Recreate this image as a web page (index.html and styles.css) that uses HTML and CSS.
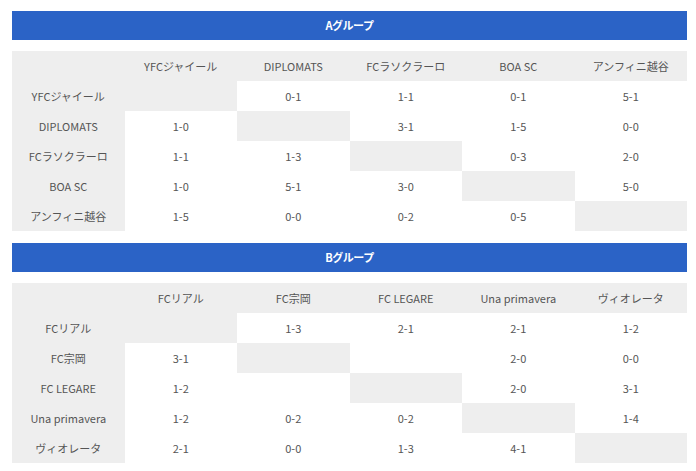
FILE: index.html
```html
<!DOCTYPE html>
<html lang="ja">
<head>
<meta charset="utf-8">
<link rel="stylesheet" href="styles.css">
</head>
<body>
<div class="page">
  <section class="group">
    <h2 class="group-title">Aグループ</h2>
    <table class="matrix">
      <tr class="head"><th></th><th>YFCジャイール</th><th>DIPLOMATS</th><th>FCラソクラーロ</th><th>BOA SC</th><th>アンフィニ越谷</th></tr>
      <tr><th>YFCジャイール</th><td class="self"></td><td>0-1</td><td>1-1</td><td>0-1</td><td>5-1</td></tr>
      <tr><th>DIPLOMATS</th><td>1-0</td><td class="self"></td><td>3-1</td><td>1-5</td><td>0-0</td></tr>
      <tr><th>FCラソクラーロ</th><td>1-1</td><td>1-3</td><td class="self"></td><td>0-3</td><td>2-0</td></tr>
      <tr><th>BOA SC</th><td>1-0</td><td>5-1</td><td>3-0</td><td class="self"></td><td>5-0</td></tr>
      <tr><th>アンフィニ越谷</th><td>1-5</td><td>0-0</td><td>0-2</td><td>0-5</td><td class="self"></td></tr>
    </table>
  </section>
  <section class="group">
    <h2 class="group-title">Bグループ</h2>
    <table class="matrix">
      <tr class="head"><th></th><th>FCリアル</th><th>FC宗岡</th><th>FC LEGARE</th><th>Una primavera</th><th>ヴィオレータ</th></tr>
      <tr><th>FCリアル</th><td class="self"></td><td>1-3</td><td>2-1</td><td>2-1</td><td>1-2</td></tr>
      <tr><th>FC宗岡</th><td>3-1</td><td class="self"></td><td></td><td>2-0</td><td>0-0</td></tr>
      <tr><th>FC LEGARE</th><td>1-2</td><td></td><td class="self"></td><td>2-0</td><td>3-1</td></tr>
      <tr><th>Una primavera</th><td>1-2</td><td>0-2</td><td>0-2</td><td class="self"></td><td>1-4</td></tr>
      <tr><th>ヴィオレータ</th><td>2-1</td><td>0-0</td><td>1-3</td><td>4-1</td><td class="self"></td></tr>
    </table>
  </section>
</div>
</body>
</html>
```
FILE: styles.css
```css
html, body {
  margin: 0;
  padding: 0;
  background: #ffffff;
}
body {
  font-family: "Noto Sans CJK JP", "Noto Sans", sans-serif;
  color: #555555;
}
.page {
  width: 675px;
  padding: 11px 0 0 12px;
}
.group {
  margin-bottom: 12px;
}
.group-title {
  margin: 0 0 11px;
  height: 29px;
  line-height: 29px;
  background: #2b63c6;
  color: #ffffff;
  font-size: 11px;
  font-weight: bold;
  text-align: center;
  letter-spacing: -0.5px;
}
.matrix {
  width: 675px;
  border-collapse: collapse;
  table-layout: fixed;
}
.matrix th, .matrix td {
  height: 30px;
  padding: 0;
  text-align: center;
  vertical-align: middle;
  font-size: 11px;
  font-weight: normal;
  background: #ffffff;
  color: #555555;
  white-space: nowrap;
}
.matrix th,
.matrix .head th,
.matrix td.self {
  background: #eeeeee;
}
```
